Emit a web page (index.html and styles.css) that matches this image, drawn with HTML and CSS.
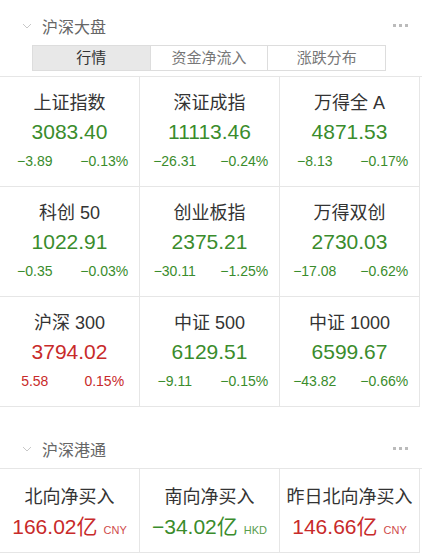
FILE: index.html
```html
<!DOCTYPE html>
<html lang="zh-CN">
<head>
  <meta charset="UTF-8">
  <meta name="viewport" content="width=device-width, initial-scale=1.0">
  <title>沪深大盘</title>
  <link rel="stylesheet" href="styles.css">
</head>
<body>

  <!-- 沪深大盘 -->
  <div class="section-head first">
    <svg class="chevron" width="10" height="6" viewBox="0 0 10 6"><polyline points="1,1 5,5 9,1" fill="none" stroke="#c8c8c8" stroke-width="1"/></svg>
    <span class="section-title">沪深大盘</span>
    <span class="more"><i></i><i></i><i></i></span>
  </div>

  <div class="tabs">
    <div class="tab active">行情</div>
    <div class="tab">资金净流入</div>
    <div class="tab">涨跌分布</div>
  </div>

  <div class="grid">
    <div class="cell">
      <div class="name">上证指数</div>
      <div class="price down">3083.40</div>
      <div class="change down"><span>−3.89</span><span>−0.13%</span></div>
    </div>
    <div class="cell">
      <div class="name">深证成指</div>
      <div class="price down">11113.46</div>
      <div class="change down"><span>−26.31</span><span>−0.24%</span></div>
    </div>
    <div class="cell">
      <div class="name">万得全 A</div>
      <div class="price down">4871.53</div>
      <div class="change down"><span>−8.13</span><span>−0.17%</span></div>
    </div>
    <div class="cell">
      <div class="name">科创 50</div>
      <div class="price down">1022.91</div>
      <div class="change down"><span>−0.35</span><span>−0.03%</span></div>
    </div>
    <div class="cell">
      <div class="name">创业板指</div>
      <div class="price down">2375.21</div>
      <div class="change down"><span>−30.11</span><span>−1.25%</span></div>
    </div>
    <div class="cell">
      <div class="name">万得双创</div>
      <div class="price down">2730.03</div>
      <div class="change down"><span>−17.08</span><span>−0.62%</span></div>
    </div>
    <div class="cell">
      <div class="name">沪深 300</div>
      <div class="price up">3794.02</div>
      <div class="change up"><span>5.58</span><span>0.15%</span></div>
    </div>
    <div class="cell">
      <div class="name">中证 500</div>
      <div class="price down">6129.51</div>
      <div class="change down"><span>−9.11</span><span>−0.15%</span></div>
    </div>
    <div class="cell">
      <div class="name">中证 1000</div>
      <div class="price down">6599.67</div>
      <div class="change down"><span>−43.82</span><span>−0.66%</span></div>
    </div>
  </div>

  <!-- 沪深港通 -->
  <div class="section-head second">
    <svg class="chevron" width="10" height="6" viewBox="0 0 10 6"><polyline points="1,1 5,5 9,1" fill="none" stroke="#c8c8c8" stroke-width="1"/></svg>
    <span class="section-title">沪深港通</span>
    <span class="more"><i></i><i></i><i></i></span>
  </div>

  <div class="grid flow">
    <div class="cell">
      <div class="name">北向净买入</div>
      <div class="amount up">166.02亿<small>CNY</small></div>
    </div>
    <div class="cell">
      <div class="name">南向净买入</div>
      <div class="amount down">−34.02亿<small>HKD</small></div>
    </div>
    <div class="cell">
      <div class="name">昨日北向净买入</div>
      <div class="amount up">146.66亿<small>CNY</small></div>
    </div>
  </div>

</body>
</html>
```

FILE: styles.css
```css
body {
  margin: 0;
  background: #fff;
  font-family: "Liberation Sans", "Noto Sans CJK SC", sans-serif;
  color: #333;
}

/* section header */
.section-head {
  display: flex;
  align-items: center;
  height: 39px;
  padding: 0 14px 0 22px;
}
.section-head.first {
  margin-top: 6px;
}
.section-head.second {
  margin-top: 22px;
}
.chevron {
  margin-right: 10px;
}
.section-title {
  font-size: 16px;
  color: #666;
  flex: 1;
}
.more {
  display: flex;
  gap: 3px;
}
.more i {
  width: 3px;
  height: 3px;
  background: #bbb;
}

/* tabs */
.tabs {
  display: flex;
  width: 354px;
  margin: 0 0 5px 32px;
  border: 1px solid #ddd;
  box-sizing: border-box;
}
.tab {
  flex: 1;
  height: 24px;
  line-height: 24px;
  text-align: center;
  font-size: 15px;
  color: #777;
  border-left: 1px solid #ddd;
}
.tab:first-child {
  border-left: none;
}
.tab.active {
  background: #e8e8e8;
  color: #333;
}

/* quote grid */
.grid {
  display: grid;
  grid-template-columns: repeat(3, 140px);
  border-top: 1px solid #e6e6e6;
}
.cell {
  height: 110px;
  padding-top: 14px;
  box-sizing: border-box;
  border-right: 1px solid #e6e6e6;
  border-bottom: 1px solid #e6e6e6;
  text-align: center;
}
.cell .name {
  font-size: 18px;
  line-height: 24px;
  color: #333;
}
.price {
  font-size: 21px;
  line-height: 34px;
}
.change {
  display: flex;
  font-size: 14px;
  line-height: 24px;
}
.change span {
  flex: 1;
}
.up {
  color: #c82a2a;
}
.down {
  color: #3a8c2c;
}

/* 沪深港通 */
.flow .cell {
  height: 84px;
  padding-top: 16px;
}
.amount {
  font-size: 21px;
  line-height: 36px;
}
.amount small {
  font-size: 11px;
  margin-left: 6px;
  opacity: 0.85;
}
```
